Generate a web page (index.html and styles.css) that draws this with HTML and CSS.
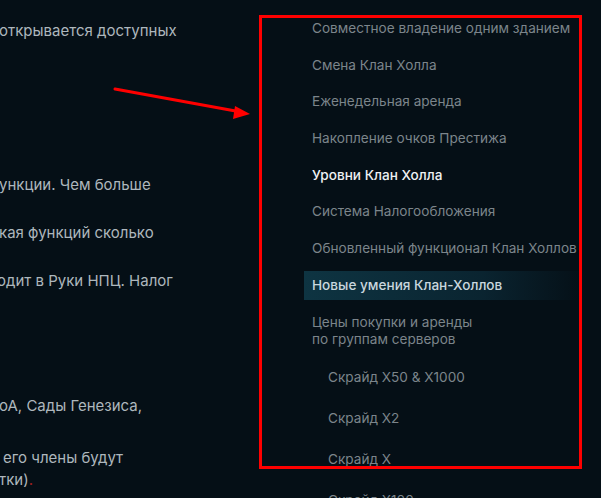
FILE: index.html
```
<!DOCTYPE html>
<html lang="ru">
<head>
    <meta charset="UTF-8">
    <meta name="viewport" content="width=device-width, initial-scale=1.0">
    <title>Клан Холлы</title>
    <link rel="stylesheet" href="styles.css">
</head>
<body>

    <div class="page">
        <article class="article">
            <p class="line l1">открывается доступных</p>
            <p class="line l2">ункции. Чем больше</p>
            <p class="line l3">кая функций сколько</p>
            <p class="line l4">одит в Руки НПЦ. Налог</p>
            <p class="line l5">оА, Сады Генезиса,</p>
            <p class="line l6">его члены будут</p>
            <p class="line l7">тки)<span class="dot">.</span></p>
        </article>

        <nav class="toc">
            <a class="toc-item">Совместное владение одним зданием</a>
            <a class="toc-item">Смена Клан Холла</a>
            <a class="toc-item">Еженедельная аренда</a>
            <a class="toc-item">Накопление очков Престижа</a>
            <a class="toc-item current">Уровни Клан Холла</a>
            <a class="toc-item">Система Налогообложения</a>
            <a class="toc-item">Обновленный функционал Клан Холлов</a>
            <a class="toc-item active">Новые умения Клан-Холлов</a>
            <a class="toc-item">Цены покупки и аренды<br>по группам серверов</a>
            <div class="toc-sub">
                <a class="toc-item sub">Скрайд X50 &amp; X1000</a>
                <a class="toc-item sub">Скрайд X2</a>
                <a class="toc-item sub">Скрайд X</a>
                <a class="toc-item sub">Скрайд X100</a>
            </div>
        </nav>
    </div>

    <!-- annotation -->
    <div class="mark-box"></div>
    <svg class="mark-arrow" width="150" height="40" viewBox="0 0 150 40">
        <line x1="2" y1="3" x2="128" y2="26" stroke="#ff0000" stroke-width="3" stroke-linecap="round"/>
        <polygon points="137,28 122,20 120,33" fill="#ff0000"/>
    </svg>

</body>
</html>
```

FILE: styles.css
```
html, body { margin: 0; padding: 0; }
body { background: #050f16; font-family: Inter, "Noto Sans", sans-serif; height: 498px; overflow: hidden; position: relative; }

.page { display: grid; grid-template-columns: 304px 1fr; }

.article { overflow: hidden; padding-top: 21px; }
.line { margin: 0; font-size: 15px; line-height: 20px; color: #aeb7bd; white-space: nowrap; }
.l1 { margin-left: -1px; }
.l2 { margin-top: 134px; margin-left: -1px; }
.l3 { margin-top: 28px; margin-left: -1px; }
.l4 { margin-top: 28px; margin-left: -3px; }
.l5 { margin-top: 105px; margin-left: -1px; }
.l6 { margin-top: 32px; margin-left: 3px; }
.l7 { margin-top: 2px; margin-left: -1px; }
.dot { color: #a02020; }

.toc { display: flex; flex-direction: column; gap: 7.7px; padding-top: 14px; }
.toc-item { display: block; padding: 6px 8px; font-size: 13.6px; line-height: 17px; color: #7c858b; white-space: nowrap; }
.toc-item.current { color: #eef1f3; font-weight: 500; }
.toc-item.active { color: #c9d7de; font-weight: 500; background: linear-gradient(90deg, #0e3442 0%, #0a2430 60%, rgba(5,15,22,0) 95%); }

.toc-sub { display: flex; flex-direction: column; gap: 8px; }
.toc-item.sub { padding: 8px 8px 8px 24px; }

.mark-box { position: absolute; left: 259px; top: 15px; width: 317px; height: 448px; border: 3px solid #ff0000; }
.mark-arrow { position: absolute; left: 113px; top: 86px; }
```
